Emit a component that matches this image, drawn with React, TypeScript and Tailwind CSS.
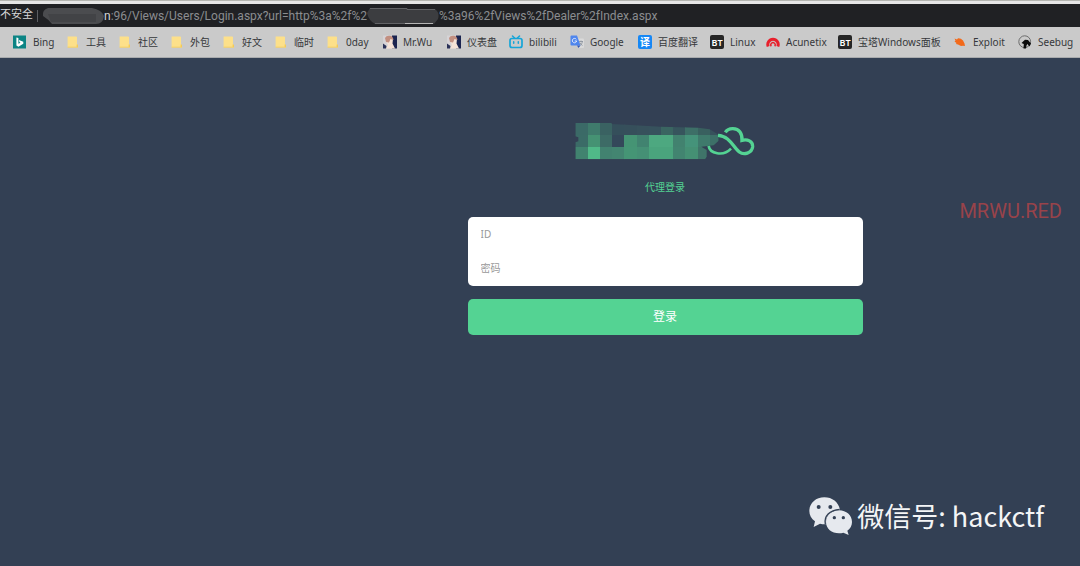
import type { ReactNode } from "react";

const Svg = ({ children, box = "0 0 14 14" }: { children: ReactNode; box?: string }) => (
  <svg viewBox={box} className="size-[14px] shrink-0" aria-hidden="true">
    {children}
  </svg>
);

const BingIcon = () => (
  <Svg>
    <rect width="13" height="13" y=".5" fill="#0c8484" />
    <path d="M3.4 2.400 5.400 3.100V8.800L7.500 7.800 6.400 6.900 5.900 5 10.300 6.800V8.800L5.400 11.700 3.400 10.400Z" fill="#fff" />
  </Svg>
);

const FolderIcon = () => (
  <Svg>
    <path d="M1.600 1.400h8.600q.8 0 .8.8v8.200l.8.6v1.400H1.600Z" fill="#fde08a" />
    <path d="M10.600 9.400h1.400v3.200H1.600v-.9h9Z" fill="#f3cb58" />
  </Svg>
);

const AvatarIcon = () => (
  <Svg>
    <rect width="14" height="13" y=".5" fill="#d6d3d6" />
    <path d="M9 .5h5v13H9Z" fill="#1b2450" />
    <path d="M3 6 6 3l4 1-.5 4.500 2.500 5H3L5 10Z" fill="#f5e2d6" />
    <path d="M2 3Q3 .5 6.500.7 10 .8 10.500 5L7.500 4 6 7.500 3 7Z" fill="#c28f80" />
    <path d="M0 8.500 3.500 11 3 13.500H0Z" fill="#2a3158" />
  </Svg>
);

const BilibiliIcon = () => (
  <Svg>
    <rect x="1" y="3.500" width="12" height="9" rx="2" fill="none" stroke="#16a5d8" strokeWidth="1.700" />
    <path d="M3.500 1 5.600 3M10.500 1 8.400 3M4.700 6.700v1.600M9.300 6.700v1.600" stroke="#16a5d8" strokeWidth="1.500" strokeLinecap="round" />
  </Svg>
);

const GoogleIcon = () => (
  <Svg>
    <path d="M6 3.500h7q1 0 1 1V12q0 1-1 1H8.500Z" fill="#dadada" />
    <path d="M1 .5h6l3.500 10H1.500q-1 0-1-1V1.500q0-1 1-1Z" fill="#4f86ee" />
    <path d="M7 10.500h3.500L8.500 13Z" fill="#3057b8" />
    <path d="M6.300 4.300A2.200 2.200 0 1 0 6.700 6H4.700" fill="none" stroke="#e6edfb" strokeWidth="1" />
    <path d="M9 6.500h4M11 5.500v1M12.500 6.500q-.5 2.500-2.500 4M9.800 7.500q1 2 2.700 3" fill="none" stroke="#7d8794" strokeWidth=".7" />
  </Svg>
);

const TranslateIcon = () => (
  <span aria-hidden="true" className="flex size-[14px] shrink-0 items-center justify-center rounded-[2px] bg-[#1687f5] text-[10px] leading-none font-bold text-white">
    译
  </span>
);

const BtIcon = () => (
  <span aria-hidden="true" className="flex size-[14px] shrink-0 items-center justify-center rounded-[2px] bg-[#262626] text-[9px] leading-none font-semibold text-white">
    BT
  </span>
);

const AcunetixIcon = () => (
  <Svg>
    <path d="M2.200 11.500A5.200 5.200 0 1 1 11.800 11.500" fill="none" stroke="#e8202c" strokeWidth="3" />
    <path d="M5.300 11.300A2.200 2.200 0 1 1 8.700 11.300" fill="none" stroke="#e8202c" strokeWidth="1.400" />
  </Svg>
);

const ExploitIcon = () => (
  <Svg>
    <path d="M1.500 3.500 4 4.500 5 3.200q3-.2 5 2.300l1.500 3 .5 2.500-2-.3-2 .3-3-1.500-2-.5.500-1-2-1.500 1-.8Z" fill="#f26a1b" />
  </Svg>
);

const SeebugIcon = () => (
  <Svg>
    <circle cx="6.700" cy="6.700" r="5.900" fill="none" stroke="#6c6c6c" strokeWidth="1" />
    <path d="M3.500 8 7 4.800 10 5 13 8.500l-1.500 3L9.300 9 8.500 10.500 8 13.500H5.500L5.800 9Z" fill="#0c0c0c" />
  </Svg>
);

type Bookmark = { label: string; icon: () => ReactNode; width: string };

const bookmarks: Bookmark[] = [
  { label: "Bing", icon: BingIcon, width: "w-[41px]" },
  { label: "工具", icon: FolderIcon, width: "w-[40px]" },
  { label: "社区", icon: FolderIcon, width: "w-[40px]" },
  { label: "外包", icon: FolderIcon, width: "w-[40px]" },
  { label: "好文", icon: FolderIcon, width: "w-[40px]" },
  { label: "临时", icon: FolderIcon, width: "w-[40px]" },
  { label: "0day", icon: FolderIcon, width: "w-[45px]" },
  { label: "Mr.Wu", icon: AvatarIcon, width: "w-[52px]" },
  { label: "仪表盘", icon: AvatarIcon, width: "w-[50px]" },
  { label: "bilibili", icon: BilibiliIcon, width: "w-[49px]" },
  { label: "Google", icon: GoogleIcon, width: "w-[56px]" },
  { label: "百度翻译", icon: TranslateIcon, width: "w-[60px]" },
  { label: "Linux", icon: BtIcon, width: "w-[44px]" },
  { label: "Acunetix", icon: AcunetixIcon, width: "w-[60px]" },
  { label: "宝塔Windows面板", icon: BtIcon, width: "w-[103px]" },
  { label: "Exploit", icon: ExploitIcon, width: "w-[53px]" },
  { label: "Seebug", icon: SeebugIcon, width: "w-[57px]" },
];

const mosaic = [
  ["#3b6a67", "#3f7b6c", "#3a6262", "#354f5b", "#364f5b", "#37515c", "#37525d", "#3a6561", "#37555d", "#3d6f67", "#39605f", "#37525c"],
  ["#3b6b67", "#459273", "#3d6b66", "#34485a", "#459474", "#418370", "#4da880", "#4da880", "#42826f", "#45937a", "#3f7a6c", "#3d7068"],
  ["#41836f", "#50b988", "#428270", "#438571", "#459575", "#459075", "#4aa47d", "#4aa47d", "#428470", "#459074", "#3f7469", "#3f7469"],
];

const Logo = () => (
  <svg viewBox="46 36 540 120" className="h-10 w-[180px]" role="img" aria-label="Logo">
    <clipPath id="brand-shape">
      <path d="M47 38H156V42L200 44L304 50L416 53L450 58L477 74V92L462 106L425 110L441 120V140L436 148H47V97L56 94V82L47 79Z" />
    </clipPath>
    <g clipPath="url(#brand-shape)" shapeRendering="crispEdges">
      {mosaic.map((row, y) =>
        row.map((fill, x) => (
          <rect key={`${x}-${y}`} x={47 + x * 36.7} y={37.5 + y * 36.7} width="38" height="38" fill={fill} />
        )),
      )}
    </g>
    <g fill="none" stroke="#54d393" strokeWidth="10">
      <path d="M497 67C506 53 531 52 541 66Q548 76 547 91C563 87 580 93 579 110C577 130 552 136 539 126C520 112 511 78 475 76" />
      <path d="M447 108C450 130 490 141 514 116" strokeWidth="8" />
    </g>
  </svg>
);

const WeChatIcon = () => (
  <svg viewBox="0 0 132 114" className="h-[38px] w-11 shrink-0" aria-hidden="true">
    <path d="M46 1C20 1 1 19 1 42c0 13 6 23 17 31l-4 17 19-10q7 2 14 2h4c-4-25 14-43 42-44C88 15 70 1 46 1Z" fill="#e6e9ee" />
    <path d="M90 40c-22 0-39 15-39 35s17 34 39 34q7 0 13-2l16 7-4-13c9-6 14-15 14-26 0-20-17-35-39-35Z" fill="#e6e9ee" />
    <path d="M49 82C44 58 62 39 92 37" fill="none" stroke="#334054" strokeWidth="4" />
    <g fill="#334054">
      <circle cx="29" cy="30" r="6" />
      <circle cx="64" cy="30" r="6" />
      <circle cx="76" cy="62" r="5" />
      <circle cx="103" cy="62" r="5" />
    </g>
  </svg>
);

export default function App() {
  return (
    <div className="relative flex min-h-screen flex-col overflow-hidden bg-[#334054] font-['Noto_Sans','Noto_Sans_CJK_SC',sans-serif]">
      <header>
        <div className="h-1 border-t border-[#b4b5b0] bg-[#e6e6e6]" />
        <div className="flex h-[23px] items-center overflow-hidden bg-[#202124] font-['Roboto','Noto_Sans_CJK_SC',sans-serif] text-xs whitespace-nowrap text-[#8b8d90]">
          <span className="text-[11px] text-[#d5d6d8]">不安全</span>
          <span className="mx-1 h-3 w-px bg-[#5c5e62]" />
          <svg viewBox="0 0 62 18" className="h-[18px] w-[62px] shrink-0" aria-hidden="true">
            <path d="M6 1H50Q60 3 62 9Q61 17 54 17H10Q6 12 1 9Q0 3 6 1Z" fill="#4b4c4f" />
            <path d="M6 7h48v8H9Z" fill="#424346" />
          </svg>
          <span className="text-[#d5d6d8]">n</span>
          <span>:96/Views/Users/Login.aspx?url=http%3a%2f%2</span>
          <svg viewBox="0 0 72 18" className="h-[18px] w-[72px] shrink-0" aria-hidden="true">
            <path d="M3 1H40V2H68Q73 6 71 12L67 17H8Q2 14 0 6Z" fill="#3c3d40" />
            <path d="M3 1.500h37v1h28" fill="none" stroke="#626366" />
            <path d="M8 16.500h30" stroke="#626366" />
            <path d="M38 16.500h28" stroke="#b5b5b5" />
          </svg>
          <span>%3a96%2fViews%2fDealer%2fIndex.aspx</span>
        </div>
        <nav aria-label="Bookmarks" className="flex h-[31px] items-center gap-3 overflow-hidden border-b border-[#a9abad] bg-[#cacaca] pl-[13px] text-[10px] whitespace-nowrap text-[#36383b]">
          {bookmarks.map(({ label, icon: Icon, width }) => (
            <a key={label} href="#" className={`flex shrink-0 items-center gap-1.5 ${width}`}>
              <Icon />
              <span>{label}</span>
            </a>
          ))}
        </nav>
      </header>

      <main className="flex flex-1 justify-center px-4 pt-16 sm:pr-0 sm:pl-[250px]">
        <form className="flex w-full max-w-[395px] flex-col items-center" onSubmit={(e) => e.preventDefault()}>
          <Logo />
          <h1 className="mt-[15px] text-[10px] leading-5 text-[#54d393]">代理登录</h1>
          <div className="mt-5 flex w-full flex-col overflow-hidden rounded-[5px] bg-white pb-px">
            <input aria-label="ID" placeholder="ID" className="h-[34px] w-full px-[13px] text-[10px] text-gray-700 outline-none placeholder:text-[#999999]" />
            <input aria-label="密码" type="password" placeholder="密码" className="h-[34px] w-full px-[13px] text-[10px] text-gray-700 outline-none placeholder:text-[#999999]" />
          </div>
          <button type="submit" className="mt-[13px] h-9 w-full rounded-[5px] bg-[#54d393] text-xs text-white">
            登录
          </button>
        </form>
      </main>

      <div className="absolute top-[198px] right-[18px] font-['Roboto',sans-serif] text-xl leading-[26px] text-[#98434a]">MRWU.RED</div>
      <div className="absolute right-9 bottom-[30px] flex items-center gap-1 font-['Noto_Sans_CJK_SC',sans-serif] text-[27px] leading-10 text-[#f4f5f6]">
        <WeChatIcon />
        <span>微信号: hackctf</span>
      </div>
    </div>
  );
}
